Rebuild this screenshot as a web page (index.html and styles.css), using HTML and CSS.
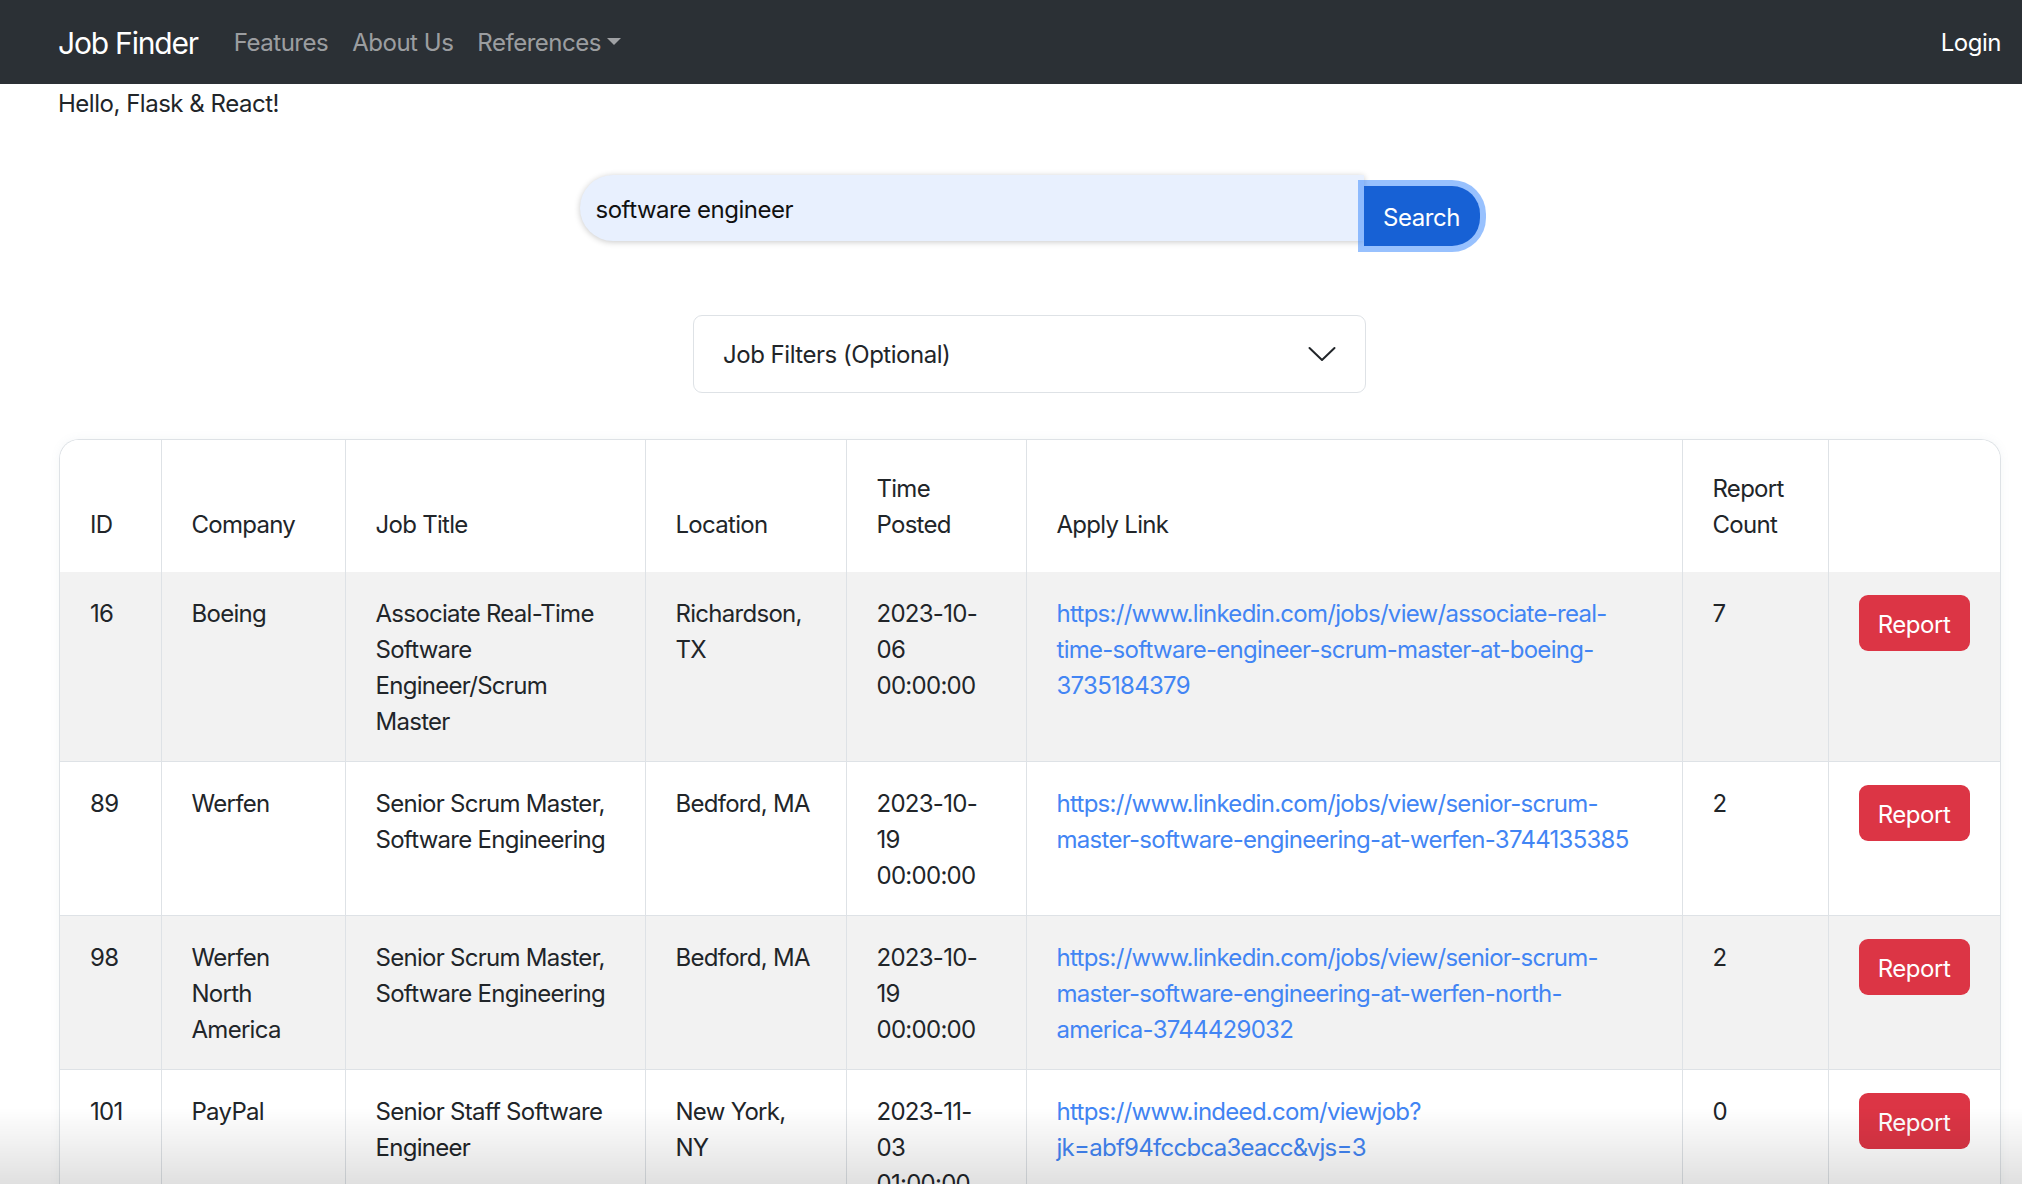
FILE: index.html
```html
<!DOCTYPE html>
<html lang="en">
<head>
<meta charset="utf-8">
<title>Job Finder</title>
<link rel="stylesheet" href="styles.css">
</head>
<body>
<nav class="navbar">
  <div class="nav-left">
    <a class="brand" href="#">Job Finder</a>
    <a class="nav-link" href="#">Features</a>
    <a class="nav-link" href="#">About Us</a>
    <a class="nav-link dropdown" href="#">References<span class="caret"></span></a>
  </div>
  <a class="nav-link login" href="#">Login</a>
</nav>

<main class="main">
  <p class="hello">Hello, Flask &amp; React!</p>

  <form class="search-form">
    <input class="search-input" type="text" value="software engineer">
    <button class="search-btn" type="button">Search</button>
  </form>

  <div class="accordion">
    <span class="accordion-title">Job Filters (Optional)</span>
    <svg class="chevron" width="28" height="16" viewBox="0 0 28 16"><path d="M1.5 2 L14 14 L26.5 2" fill="none" stroke="#212529" stroke-width="2" stroke-linecap="round" stroke-linejoin="round"/></svg>
  </div>

  <div class="table-wrap">
    <table class="jobs">
      <colgroup>
        <col class="c-id"><col class="c-company"><col class="c-title"><col class="c-loc"><col class="c-time"><col class="c-link"><col class="c-count"><col class="c-action">
      </colgroup>
      <thead>
        <tr>
          <th>ID</th><th>Company</th><th>Job Title</th><th>Location</th><th>Time Posted</th><th>Apply Link</th><th>Report Count</th><th></th>
        </tr>
      </thead>
      <tbody>
        <tr class="odd">
          <td>16</td><td>Boeing</td><td>Associate Real-Time Software Engineer/Scrum Master</td><td>Richardson, TX</td><td>2023-10-06 00:00:00</td>
          <td><a href="#">https://www.linkedin.com/jobs/view/associate-real-time-software-engineer-scrum-master-at-boeing-3735184379</a></td>
          <td>7</td><td><button class="report-btn" type="button">Report</button></td>
        </tr>
        <tr>
          <td>89</td><td>Werfen</td><td>Senior Scrum Master, Software Engineering</td><td>Bedford, MA</td><td>2023-10-19 00:00:00</td>
          <td><a href="#">https://www.linkedin.com/jobs/view/senior-scrum-master-software-engineering-at-werfen-3744135385</a></td>
          <td>2</td><td><button class="report-btn" type="button">Report</button></td>
        </tr>
        <tr class="odd">
          <td>98</td><td>Werfen North America</td><td>Senior Scrum Master, Software Engineering</td><td>Bedford, MA</td><td>2023-10-19 00:00:00</td>
          <td><a href="#">https://www.linkedin.com/jobs/view/senior-scrum-master-software-engineering-at-werfen-north-america-3744429032</a></td>
          <td>2</td><td><button class="report-btn" type="button">Report</button></td>
        </tr>
        <tr>
          <td>101</td><td>PayPal</td><td>Senior Staff Software Engineer</td><td>New York, NY</td><td>2023-11-03 01:00:00</td>
          <td><a href="#">https://www.indeed.com/viewjob?jk=abf94fccbca3eacc&amp;vjs=3</a></td>
          <td>0</td><td><button class="report-btn" type="button">Report</button></td>
        </tr>
      </tbody>
    </table>
  </div>
</main>
<div class="bottom-fade"></div>
</body>
</html>
```

FILE: styles.css
```css
* { box-sizing: border-box; }

html, body {
  margin: 0;
  padding: 0;
  background: #fff;
}

body {
  font-family: Inter, "Noto Sans", "Liberation Sans", sans-serif;
  font-size: 24px;
  line-height: 36px;
  letter-spacing: -0.02em;
  color: #212529;
}

a { text-decoration: none; }

.navbar {
  height: 84px;
  background: #2b3035;
  display: flex;
  align-items: center;
  justify-content: space-between;
  padding: 2px 21px 0 58px;
}

.nav-left {
  display: flex;
  align-items: center;
}

.brand {
  color: #fff;
  font-size: 30px;
  line-height: 45px;
  letter-spacing: -0.04em;
  margin-right: 24px;
}

.nav-link {
  color: rgba(255, 255, 255, 0.55);
  padding: 0 12px;
  font-size: 24px;
  line-height: 36px;
  display: flex;
  align-items: center;
}

.login {
  color: #fff;
  padding: 0;
}

.caret {
  display: inline-block;
  margin-left: 6px;
  width: 0;
  height: 0;
  border-left: 7px solid transparent;
  border-right: 7px solid transparent;
  border-top: 7px solid rgba(255, 255, 255, 0.55);
  margin-top: -4px;
}

.main {
  padding: 0 21px 0 58px;
}

.hello {
  margin: 0;
  padding-top: 2px;
  line-height: 36px;
}

.search-form {
  margin-top: 53px;
  display: flex;
  justify-content: center;
  align-items: flex-start;
}

.search-input {
  width: 784px;
  height: 66px;
  border: none;
  border-radius: 33px 0 0 33px;
  background: #e8f0fe;
  box-shadow: 0 1px 6px rgba(0, 0, 0, 0.22);
  padding: 2px 16px 0;
  font-family: inherit;
  font-size: 24px;
  letter-spacing: -0.02em;
  color: #111;
  outline: none;
}

.search-btn {
  width: 116px;
  height: 60px;
  margin-top: 11px;
  border: none;
  background: #1761d5;
  color: #fff;
  font-family: inherit;
  font-size: 24px;
  letter-spacing: -0.02em;
  border-radius: 0 28px 28px 0;
  box-shadow: 0 0 0 6px rgba(49, 132, 253, 0.5);
  padding: 2px 0 0;
}

.accordion {
  width: 673px;
  height: 78px;
  margin: 69px auto 0;
  border: 1px solid #dee2e6;
  border-radius: 9px;
  display: flex;
  align-items: center;
  justify-content: space-between;
  padding: 2px 29px 0 29px;
  background: #fff;
}

.chevron { display: block; margin-top: -2px; }

.table-wrap {
  margin-top: 46px;
  border: 1px solid #dee2e6;
  border-bottom: none;
  border-radius: 20px 20px 0 0;
  overflow: hidden;
  box-shadow: 0 0 10px rgba(120, 140, 170, 0.08);
  width: 1942px;
  margin-left: 1px;
}

.jobs {
  width: 1940px;
  table-layout: fixed;
  border-collapse: collapse;
  background: #fff;
  letter-spacing: -0.03em;
}

.c-id { width: 101px; }
.c-company { width: 184px; }
.c-title { width: 300px; }
.c-loc { width: 201px; }
.c-time { width: 180px; }
.c-link { width: 656px; }
.c-count { width: 146px; }
.c-action { width: 172px; }

.jobs th,
.jobs td {
  text-align: left;
  font-weight: 400;
  border-left: 1px solid #dee2e6;
  border-bottom: 1px solid #dee2e6;
  padding: 24px 30px 21px;
}

.jobs th:first-child,
.jobs td:first-child { border-left: none; }

.jobs th {
  vertical-align: bottom;
  padding-top: 31px;
  padding-bottom: 29px;
  border-bottom: none;
}

.jobs td { vertical-align: top; }

.jobs tr.odd td { background: #f2f2f2; }

.jobs td a { color: #4285f4; }

.report-btn {
  display: block;
  width: 111px;
  height: 56px;
  margin-top: -1px;
  border: none;
  border-radius: 9px;
  background: #dc3545;
  color: #fff;
  font-family: inherit;
  font-size: 24px;
  letter-spacing: -0.02em;
  padding: 2px 0 0;
}

.bottom-fade {
  position: fixed;
  left: 0;
  right: 0;
  bottom: 0;
  height: 76px;
  background: linear-gradient(to bottom, rgba(0, 0, 0, 0), rgba(0, 0, 0, 0.12));
  pointer-events: none;
}
```
